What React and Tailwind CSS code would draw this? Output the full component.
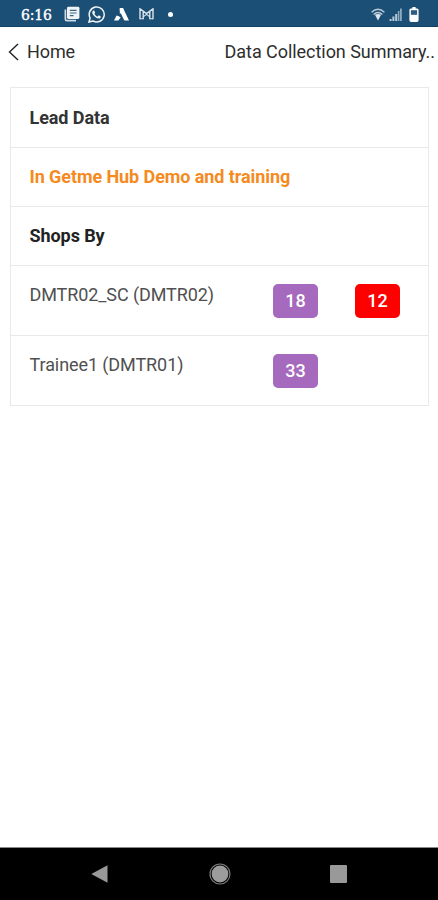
const shops = [
    { name: "DMTR02_SC (DMTR02)", visited: 18, missed: 12 },
    { name: "Trainee1 (DMTR01)", visited: 33 },
]

const StatusBar = () => {
    return (
        <div className="h-[27px] shrink-0 flex items-center bg-[#1c4f75] text-white pl-[21px] pr-[19px] border-b border-[#123f66]">
            <p className="w-[43px] pt-[3px] font-['DejaVu_Serif',serif] text-[14px] leading-none tracking-[-0.2px] [-webkit-text-stroke:0.4px_white]">6:16</p>
            <svg className="w-4 h-4 mt-0.5" viewBox="0 0 16 16" fill="none">
                <path d="M1.4 3.5V13.2Q1.4 14.6 2.8 14.6H12" stroke="#cfdbe4" strokeWidth="1.7" />
                <rect x="3" y="0.8" width="12.4" height="12.2" rx="1.4" fill="#f1f4f7" />
                <path d="M5.8 4.4H12.6M5.8 7H12.6M5.8 9.6H9.6" stroke="#3c6786" strokeWidth="1.1" />
            </svg>
            <svg className="w-[17px] h-[17px] ml-[8px] mt-0.5" viewBox="0 0 24 24" fill="#f1f4f7">
                <path d="M17.472 14.382c-.297-.149-1.758-.867-2.03-.967-.273-.099-.471-.148-.67.15-.197.297-.767.966-.94 1.164-.173.199-.347.223-.644.075-.297-.15-1.255-.463-2.39-1.475-.883-.788-1.48-1.761-1.653-2.059-.173-.297-.018-.458.13-.606.134-.133.298-.347.446-.52.149-.174.198-.298.298-.497.099-.198.05-.371-.025-.52-.075-.149-.669-1.612-.916-2.207-.242-.579-.487-.5-.669-.51-.173-.008-.371-.01-.57-.01-.198 0-.52.074-.792.372-.272.297-1.04 1.016-1.04 2.479 0 1.462 1.065 2.875 1.213 3.074.149.198 2.096 3.2 5.077 4.487.709.306 1.262.489 1.694.625.712.227 1.36.195 1.871.118.571-.085 1.758-.719 2.006-1.413.248-.694.248-1.289.173-1.413-.074-.124-.272-.198-.57-.347" />
                <path d="M1.4 22.6L3 17A10.6 10.6 0 1 1 7 21.1Z" fill="none" stroke="#f1f4f7" strokeWidth="2.1" />
            </svg>
            <svg className="w-[15px] h-[13px] ml-[9px] mt-0.5" viewBox="0 0 15 13" fill="#fff">
                <path d="M5.8 0H9L15 12.6H11.4Q10.4 12.6 9.8 11.4L7.4 6.4L5.8 2.8Z" />
                <path d="M5.8 0H9L10 5L5.8 5.6Z" />
                <path d="M0 12.6L2.6 7.4Q5 7.6 6.6 9.6L4.4 12.6Z" />
            </svg>
            <svg className="w-[15px] h-[12px] ml-[10px] mt-0.5" viewBox="0 0 15 12" fill="none" stroke="#dbe4eb">
                <path d="M1 11.2V0.8L7.5 5.6L14 0.8V11.2M4.2 11.2V3.4M10.8 11.2V3.4" strokeWidth="1.4" />
                <path d="M1 10.8H4.2M10.8 10.8H14M4.2 8.8L7.5 6.4L10.8 8.8" strokeWidth="1.1" />
            </svg>
            <div className="w-[5px] h-[5px] ml-[14px] mt-0.5 rounded-full bg-white" />
            <div className="ml-auto flex items-center mt-0.5">
                <svg className="w-[14px] h-[13px]" viewBox="0 0 14 13" fill="none" stroke="#b9cad7">
                    <path d="M0.6 4.2Q7 -1.6 13.4 4.2M2.6 6.4Q7 2.4 11.4 6.4" strokeWidth="1.4" />
                    <path d="M4 6.8Q7 5 10 6.8L7 12.4Z" fill="#dfe8ee" stroke="none" />
                </svg>
                <svg className="w-[13px] h-[13px] ml-[4px]" viewBox="0 0 13 13">
                    <path d="M0.6 11H2.6V13H0.6ZM3.4 8.6H5.4V13H3.4ZM6.2 6H8.2V13H6.2Z" fill="#b9cad7" />
                    <path d="M8.8 3H10.4V13H8.8ZM11 0.5H12.8V13H11Z" fill="#8fa9bf" />
                </svg>
                <svg className="w-[10px] h-[15px] ml-[7px]" viewBox="0 0 10 15">
                    <path d="M3.4 0H6.6V1.4H8.2Q9.6 1.4 9.6 3V13Q9.6 15 8 15H2Q0.4 15 0.4 13V3Q0.4 1.4 1.8 1.4H3.4Z" fill="#fff" />
                    <rect x="1.9" y="3.2" width="6.2" height="4.6" fill="#2c5c80" />
                </svg>
            </div>
        </div>
    )
}

const Header = () => {
    return (
        <div className="h-[60px] shrink-0 flex items-start justify-between pt-[13px] pl-2 pr-[3px] text-[18px] leading-6 text-[#2e2e2e]">
            <div className="flex items-center">
                <svg className="w-[11px] h-[18px] mr-[8px] -mt-px" viewBox="0 0 11 18" fill="none" stroke="#222" strokeWidth="1.4">
                    <path d="M10 1L1.5 9L10 17" />
                </svg>
                <p className="tracking-[-0.1px]">Home</p>
            </div>
            <p className="whitespace-nowrap tracking-[-0.05px]">Data Collection Summary..</p>
        </div>
    )
}

const ShopRow = ({ shop }) => {
    return (
        <div className="h-[70px] flex items-start border-b border-[#e9e9e9] pl-[18.5px] text-[#505050]">
            <p className="w-[243.5px] pt-[17px] text-[18px] leading-6 tracking-[-0.09px]">{shop.name}</p>
            <p className="w-[45px] h-[34px] mt-[18px] rounded-[5px] bg-[#a569bd] text-white text-[18px] leading-[33px] font-medium text-center">{shop.visited}</p>
            {shop.missed && (
                <p className="w-[45px] h-[34px] mt-[18px] ml-[37px] rounded-[5px] bg-[#ff0000] text-white text-[18px] leading-[33px] font-medium text-center">{shop.missed}</p>
            )}
        </div>
    )
}

const NavBar = () => {
    return (
        <div className="h-[53px] shrink-0 mt-auto bg-black border-t border-[#8a8a8a] flex items-center pl-[91px]">
            <svg className="w-[17px] h-[18px]" viewBox="0 0 17 18" fill="#999">
                <path d="M0.3 9L16.5 0.2V17.8Z" />
            </svg>
            <svg className="w-[22px] h-[22px] ml-[101px]" viewBox="0 0 22 22">
                <circle cx="11" cy="11" r="10" fill="none" stroke="#7c7c7c" strokeWidth="1.2" />
                <circle cx="11" cy="11" r="8.4" fill="#9c9c9c" />
            </svg>
            <div className="w-[17px] h-[18px] ml-[99px] rounded-[1px] bg-[#999]" />
        </div>
    )
}

const App = () => {
    return (
        <div className="h-screen w-full flex flex-col overflow-hidden bg-white font-[Roboto,sans-serif]">
            <StatusBar />
            <Header />
            <div className="ml-[10px] mr-[9px] border border-b-0 border-[#e9e9e9]">
                <div className="h-[60px] flex items-center border-b border-[#e9e9e9] pl-[18.5px]">
                    <p className="text-[18px] font-bold text-[#333] tracking-[-0.08px]">Lead Data</p>
                </div>
                <div className="h-[59px] flex items-center border-b border-[#e9e9e9] pl-[18.5px] pb-[2px]">
                    <p className="text-[18px] font-bold text-[#f58a1f] tracking-[-0.08px]">In Getme Hub Demo and training</p>
                </div>
                <div className="h-[59px] flex items-center border-b border-[#e9e9e9] pl-[18.5px] pb-[2px]">
                    <p className="text-[18px] font-bold text-[#222] tracking-[-0.08px]">Shops By</p>
                </div>
                {shops.map((shop) => (
                    <ShopRow key={shop.name} shop={shop} />
                ))}
            </div>
            <NavBar />
        </div>
    )
}

export default App
